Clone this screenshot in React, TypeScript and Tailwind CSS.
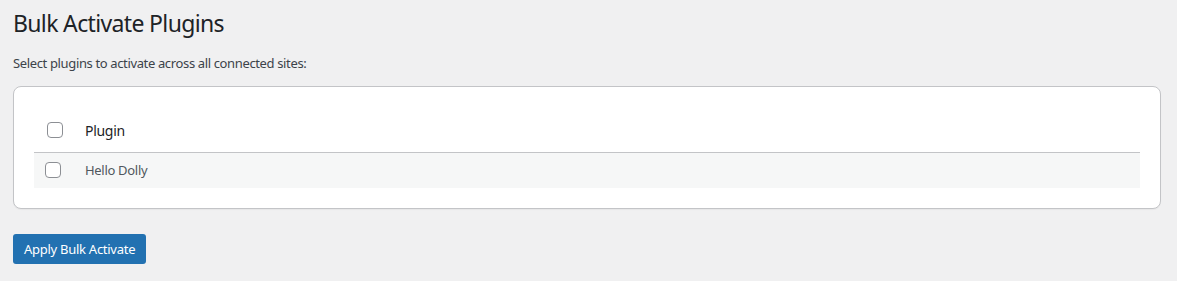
export default function App() {
  return (
    <div className="min-h-[281px] bg-[#f0f0f1] pl-[13px] pr-[16px] pt-[9px] text-[#1d2327] [font-family:'Noto_Sans',sans-serif]">
      <h1 className="text-[23px] leading-[29px] font-normal tracking-[-0.65px]">Bulk Activate Plugins</h1>
      <p className="mt-[16px] text-[13px] leading-[19px] tracking-[-0.36px] text-[#3c434a]">
        Select plugins to activate across all connected sites:
      </p>
      <div className="mt-[13px] rounded-[8px] border border-[#c3c4c7] bg-white px-[20px] pt-[20px] pb-[20px] shadow-[0_1px_1px_rgba(0,0,0,0.04)]">
        <table className="w-full border-collapse text-[13px] tracking-[-0.3px]">
          <thead>
            <tr className="border-b border-[#c3c4c7]">
              <td className="w-[51px] h-[45px] pl-[13px] pt-[2px] align-middle">
                <span className="block h-[16px] w-[16px] rounded-[4px] border border-[#8c8f94] bg-white" />
              </td>
              <td className="pt-[2px] align-middle text-[14px] tracking-[-0.3px] text-[#1d2327]">Plugin</td>
            </tr>
          </thead>
          <tbody>
            <tr className="bg-[#f6f7f7]">
              <td className="h-[36px] pl-[11px] align-middle">
                <span className="block h-[16px] w-[16px] rounded-[4px] border border-[#8c8f94] bg-white" />
              </td>
              <td className="align-middle text-[#50575e]">Hello Dolly</td>
            </tr>
          </tbody>
        </table>
      </div>
      <button
        type="button"
        className="mt-[25px] h-[30px] rounded-[3px] bg-[#2271b1] px-[11px] text-[13px] leading-[28px] tracking-[-0.27px] text-white"
      >
        Apply Bulk Activate
      </button>
    </div>
  );
}
